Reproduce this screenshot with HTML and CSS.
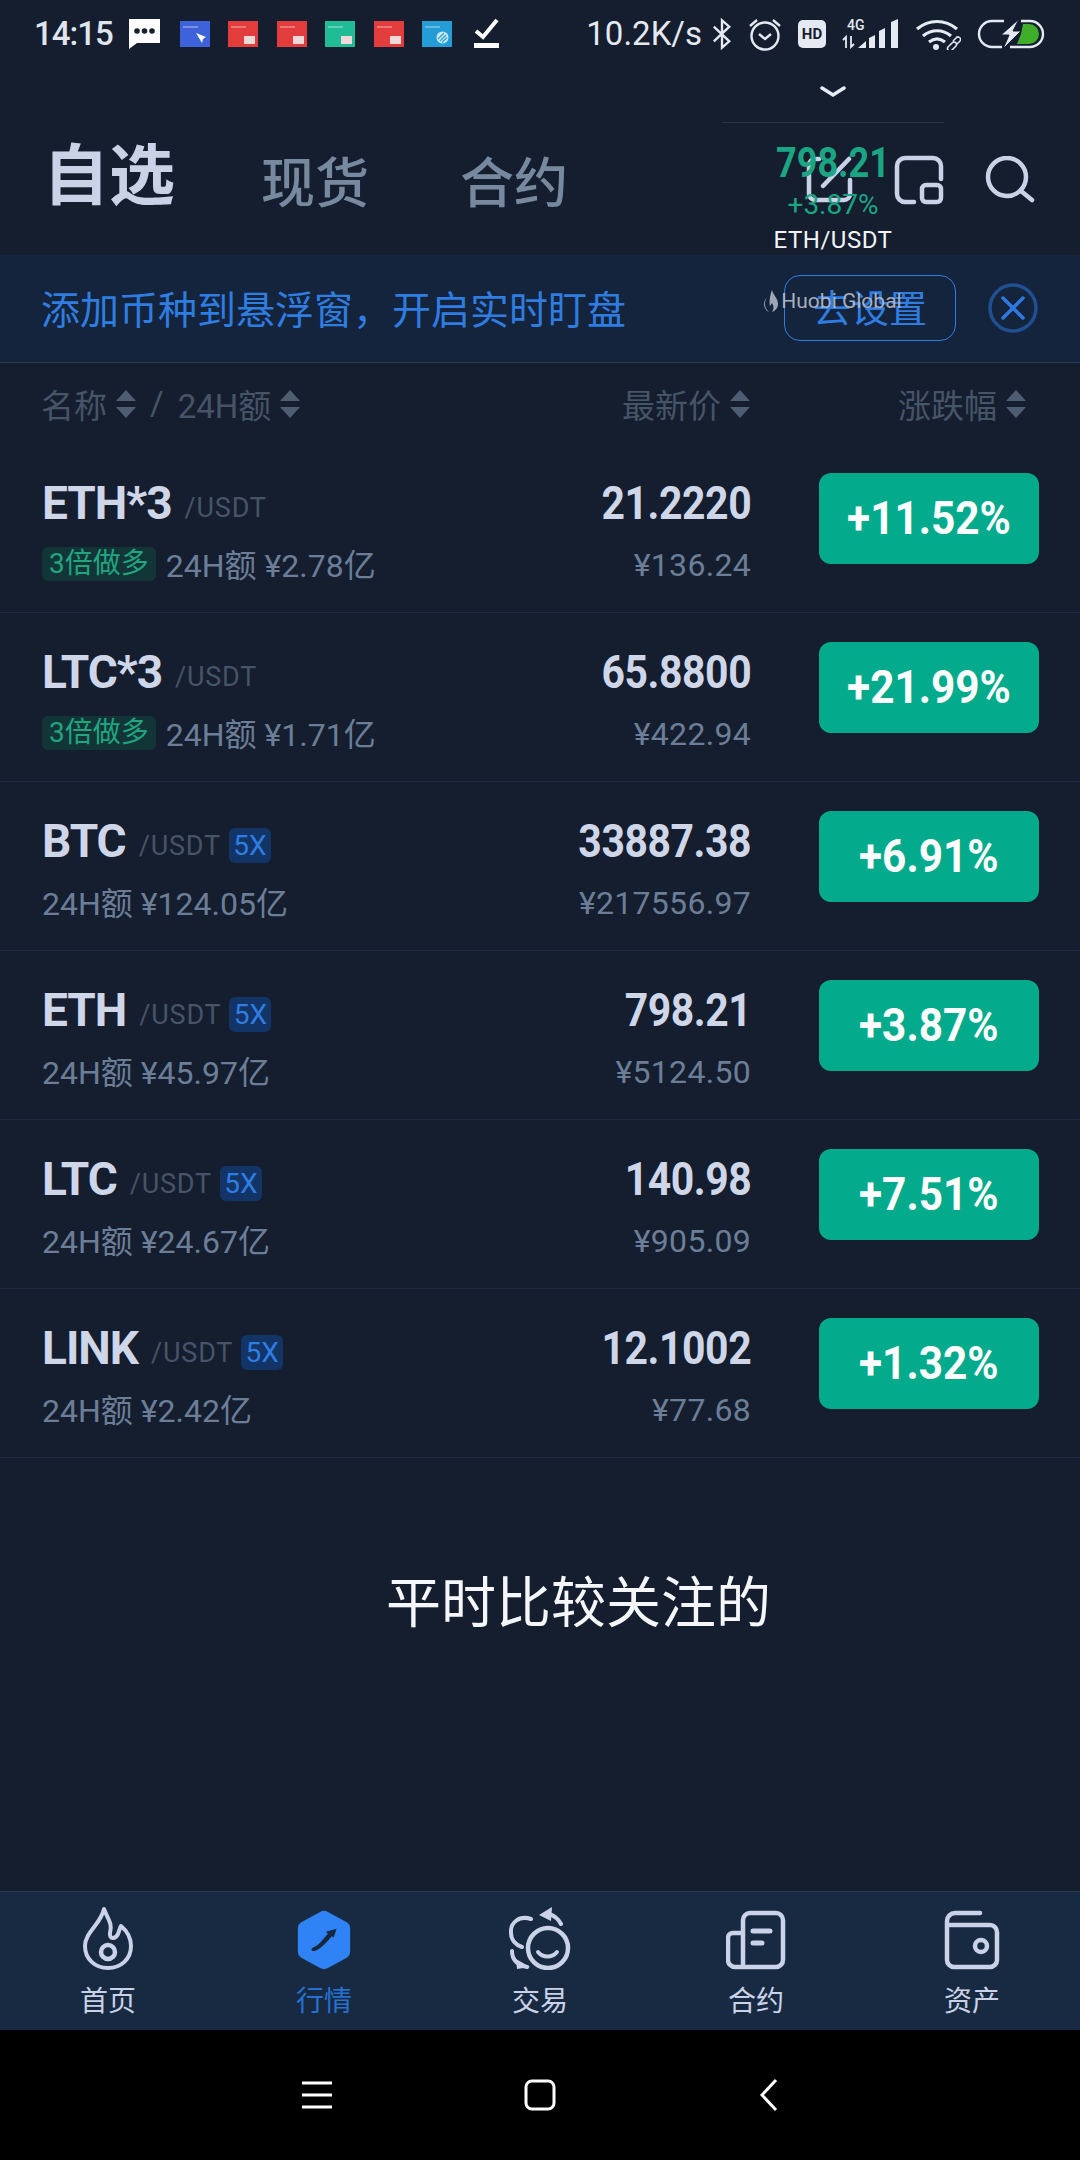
FILE: index.html
```html
<!DOCTYPE html>
<html lang="zh-CN">
<head>
    <meta charset="UTF-8">
    <meta name="viewport" content="width=device-width, initial-scale=1.0">
    <title>自选</title>
    <link rel="stylesheet" href="styles.css">
</head>
<body>
    <div class="phone">
        <div class="status-bar">
            <div class="status-left">
                <span class="clock">14:15</span>
                <svg class="msg-icon" width="33" height="32" viewBox="0 0 33 32"><path d="M1 1h31v24H9l-8 6z" fill="#fff"/><circle cx="9" cy="13" r="2.8" fill="#16202f"/><circle cx="16.5" cy="13" r="2.8" fill="#16202f"/><circle cx="24" cy="13" r="2.8" fill="#16202f"/></svg>
                <span class="app-tile tile-blue"><svg width="12" height="12" viewBox="0 0 12 12"><path d="M1 1l10 4-3 2-1 4z" fill="#fff"/></svg></span>
                <span class="app-tile tile-red"><i></i></span>
                <span class="app-tile tile-red"><i></i></span>
                <span class="app-tile tile-green"><i></i></span>
                <span class="app-tile tile-red"><i></i></span>
                <span class="app-tile tile-sky"><svg width="13" height="13" viewBox="0 0 13 13"><circle cx="6.5" cy="6.5" r="6" fill="#cfe9f7"/><path d="M2 8l6-6M4 10l6-6M6 11.500l5-5" stroke="#26a0d8" stroke-width="1.200"/></svg></span>
                <svg class="check-icon" width="25" height="31" viewBox="0 0 25 31"><path d="M2 13l7 6L23 2" fill="none" stroke="#fff" stroke-width="4"/><path d="M0 25h25v5H0z" fill="#fff"/></svg>
            </div>
            <div class="status-right">
                <span class="net-speed">10.2K/s</span>
                <svg width="20" height="34" viewBox="0 0 22 34"><path d="M2 9l17 16-8 7V2l8 7L2 25" fill="none" stroke="#e4e9f2" stroke-width="2.600"/></svg>
                <svg width="34" height="34" viewBox="0 0 34 34"><circle cx="17" cy="19" r="13.500" fill="none" stroke="#e4e9f2" stroke-width="2.400"/><path d="M11 17l6 5 6-5M2 9l7-6M32 9l-7-6" fill="none" stroke="#e4e9f2" stroke-width="2.400"/></svg>
                <span class="hd-badge">HD</span>
                <svg width="57" height="30" viewBox="0 0 57 30"><text x="5" y="11" class="net-type">4G</text><path d="M4 29V18l-3 3M9 17v11l3-3" fill="none" stroke="#e4e9f2" stroke-width="1.800"/><path d="M16 29l8-7v7zM27 29V19l6-3v13zM37 29V12l6-3v20zM49 29V3l7-3v29z" fill="#e4e9f2"/></svg>
                <svg width="46" height="32" viewBox="0 0 46 32"><path d="M2 11c12-10 28-10 40 0M8 18c8-7 20-7 28 0M14 24c5-4 11-4 16 0" fill="none" stroke="#e4e9f2" stroke-width="3.200"/><circle cx="21" cy="29" r="3" fill="#e4e9f2"/><path d="M33 29l4-4a2.500 2.500 0 0 1 4 0 2.500 2.500 0 0 1 0 3l-4 4a2.500 2.500 0 0 1-4 0 2.500 2.500 0 0 1 0-3zM38 23l3-3a2.500 2.500 0 0 1 4 3l-3 3" fill="none" stroke="#e4e9f2" stroke-width="1.500"/></svg>
                <svg width="68" height="30" viewBox="0 0 68 30"><path d="M27 2H15a13 13 0 0 0 0 26h10M44 2h9a13 13 0 0 1 0 26H33" fill="none" stroke="#e4e9f2" stroke-width="2.400"/><path d="M46 5h6a10 10 0 0 1 0 20H40l4-10z" fill="#3fae2a"/><path d="M42 0L24 16h8l-6 14 18-18h-8z" fill="#e4e9f2" stroke="#161f30" stroke-width="1"/></svg>
            </div>
        </div>

        <div class="top-bar">
            <div class="tabs">
                <span class="tab tab-active">自选</span>
                <span class="tab">现货</span>
                <span class="tab">合约</span>
            </div>
            <div class="top-icons">
                <svg width="47" height="47" viewBox="0 0 47 47"><path d="M13 3H9a6 6 0 0 0-6 6v29a6 6 0 0 0 6 6h29a6 6 0 0 0 6-6V24M17 30L43 3" fill="none" stroke="#c9d2e6" stroke-width="4.500" stroke-linecap="round"/></svg>
                <svg width="50" height="50" viewBox="0 0 50 50"><path d="M20 47H11a8 8 0 0 1-8-8V11a8 8 0 0 1 8-8h28a8 8 0 0 1 8 8v13" fill="none" stroke="#c9d2e6" stroke-width="4.500" stroke-linecap="round"/><rect x="28" y="30" width="19" height="17" rx="4" fill="none" stroke="#c9d2e6" stroke-width="4.500"/></svg>
                <svg width="50" height="47" viewBox="0 0 50 47"><circle cx="22" cy="21" r="19" fill="none" stroke="#c9d2e6" stroke-width="4.500"/><path d="M36 35l11 9" stroke="#c9d2e6" stroke-width="4.500" stroke-linecap="round"/></svg>
            </div>
        </div>

        <div class="banner">
            <span class="banner-text">添加币种到悬浮窗，开启实时盯盘</span>
            <div class="banner-actions">
                <span class="banner-btn">去设置</span>
                <svg width="50" height="50" viewBox="0 0 50 50"><circle cx="25" cy="25" r="23" fill="none" stroke="#20508f" stroke-width="3.500"/><path d="M15 15l20 20M35 15L15 35" stroke="#2f79e0" stroke-width="3.500" stroke-linecap="round"/></svg>
            </div>
        </div>

        <div class="list-head">
            <div class="head-left">
                <span>名称</span><i class="sort"></i><span class="head-slash">/</span><span>24H额</span><i class="sort"></i>
            </div>
            <div class="head-price"><span>最新价</span><i class="sort"></i></div>
            <div class="head-change"><span>涨跌幅</span><i class="sort"></i></div>
        </div>

        <div class="coin-list">
            <div class="coin-row">
                <div class="coin-info">
                    <div class="coin-name"><b>ETH*3</b><span class="quote">/USDT</span></div>
                    <div class="coin-vol"><span class="tag-long">3倍做多</span>24H额 ¥2.78亿</div>
                </div>
                <div class="coin-price"><b>21.2220</b><span>¥136.24</span></div>
                <div class="coin-change"><span>+11.52%</span></div>
            </div>
            <div class="coin-row">
                <div class="coin-info">
                    <div class="coin-name"><b>LTC*3</b><span class="quote">/USDT</span></div>
                    <div class="coin-vol"><span class="tag-long">3倍做多</span>24H额 ¥1.71亿</div>
                </div>
                <div class="coin-price"><b>65.8800</b><span>¥422.94</span></div>
                <div class="coin-change"><span>+21.99%</span></div>
            </div>
            <div class="coin-row">
                <div class="coin-info">
                    <div class="coin-name"><b>BTC</b><span class="quote">/USDT</span><span class="tag-lever">5X</span></div>
                    <div class="coin-vol">24H额 ¥124.05亿</div>
                </div>
                <div class="coin-price"><b>33887.38</b><span>¥217556.97</span></div>
                <div class="coin-change"><span>+6.91%</span></div>
            </div>
            <div class="coin-row">
                <div class="coin-info">
                    <div class="coin-name"><b>ETH</b><span class="quote">/USDT</span><span class="tag-lever">5X</span></div>
                    <div class="coin-vol">24H额 ¥45.97亿</div>
                </div>
                <div class="coin-price"><b>798.21</b><span>¥5124.50</span></div>
                <div class="coin-change"><span>+3.87%</span></div>
            </div>
            <div class="coin-row">
                <div class="coin-info">
                    <div class="coin-name"><b>LTC</b><span class="quote">/USDT</span><span class="tag-lever">5X</span></div>
                    <div class="coin-vol">24H额 ¥24.67亿</div>
                </div>
                <div class="coin-price"><b>140.98</b><span>¥905.09</span></div>
                <div class="coin-change"><span>+7.51%</span></div>
            </div>
            <div class="coin-row">
                <div class="coin-info">
                    <div class="coin-name"><b>LINK</b><span class="quote">/USDT</span><span class="tag-lever">5X</span></div>
                    <div class="coin-vol">24H额 ¥2.42亿</div>
                </div>
                <div class="coin-price"><b>12.1002</b><span>¥77.68</span></div>
                <div class="coin-change"><span>+1.32%</span></div>
            </div>
        </div>

        <div class="caption-area">
            <p class="caption">平时比较关注的</p>
        </div>

        <div class="tab-bar">
            <div class="tab-item">
                <svg width="50" height="64" viewBox="0 0 50 64"><path d="M21 3C24 12 30 17 27 27C26 33 32 34 35 28C36 25 37 22 38 20C44 25 48 32 48 40C48 53 38 62 25 62C12 62 2 53 2 40C2 26 18 18 21 3z" fill="none" stroke="#c9d2e6" stroke-width="4" stroke-linejoin="round"/><circle cx="25" cy="46" r="7" fill="none" stroke="#c9d2e6" stroke-width="4.500"/></svg>
                <span>首页</span>
            </div>
            <div class="tab-item tab-item-active">
                <svg width="56" height="60" viewBox="0 0 56 62"><path d="M24 2a8 8 0 0 1 8 0l20 11a7 7 0 0 1 3 6v24a7 7 0 0 1-3 6L32 60a8 8 0 0 1-8 0L4 49a7 7 0 0 1-3-6V19a7 7 0 0 1 3-6z" fill="#2f83f5"/><path d="M15 41c0-2 3-2.500 6-4.500 5-4 7-8 11-12l-2-2 11-3-3 9-2-1.500c-4 5-8 9-13 13-4 3-8 3-8 1z" fill="#16283f"/></svg>
                <span>行情</span>
            </div>
            <div class="tab-item">
                <svg width="62" height="64" viewBox="20 11 62 64"><circle cx="59" cy="53" r="20" fill="none" stroke="#c9d2e6" stroke-width="4.500"/><path d="M49 57C54 63 63 63 68 57" fill="none" stroke="#c9d2e6" stroke-width="4" stroke-linecap="round"/><path d="M42 24C30 20 21 28 22 38C22 45 27 50 33 52M23 56C23 65 28 70 38 72M60 19C66 21 70 25 72 29" fill="none" stroke="#c9d2e6" stroke-width="4" stroke-linecap="round"/><path d="M50 20L63 12L62 26zM28 74L41 72L27 64z" fill="#c9d2e6"/></svg>
                <span>交易</span>
            </div>
            <div class="tab-item">
                <svg width="60" height="60" viewBox="0 0 60 60"><path d="M17 57V10a7 7 0 0 1 7-7h26a7 7 0 0 1 7 7v40a7 7 0 0 1-7 7H9a7 7 0 0 1-7-7V28a5 5 0 0 1 5-5h10" fill="none" stroke="#c9d2e6" stroke-width="4.500"/><path d="M27 21h17M27 33h9" stroke="#c9d2e6" stroke-width="5" stroke-linecap="round"/></svg>
                <span>合约</span>
            </div>
            <div class="tab-item">
                <svg width="56" height="60" viewBox="0 0 56 60"><path d="M36 3H11a8 8 0 0 0-8 8v39a7 7 0 0 0 7 7h36a7 7 0 0 0 7-7V22a7 7 0 0 0-7-7H3" fill="none" stroke="#c9d2e6" stroke-width="4.500" stroke-linecap="round"/><circle cx="37" cy="36" r="6" fill="none" stroke="#c9d2e6" stroke-width="4.500"/></svg>
                <span>资产</span>
            </div>
        </div>

        <div class="nav-bar">
            <svg class="nav-menu" width="30" height="28" viewBox="0 0 30 28"><path d="M0 2h30M0 14h30M0 26h30" stroke="#fff" stroke-width="3"/></svg>
            <svg class="nav-home" width="32" height="32" viewBox="0 0 32 32"><rect x="2" y="2" width="28" height="28" rx="6" fill="none" stroke="#fff" stroke-width="3"/></svg>
            <svg width="18" height="34" viewBox="0 0 18 34"><path d="M16 2L2 17l14 15" fill="none" stroke="#fff" stroke-width="3"/></svg>
        </div>

        <!-- floating price window, sits over the top bar and banner -->
        <div class="float-win">
            <svg class="float-arrow" width="26" height="12" viewBox="0 0 26 12"><path d="M2 2l11 7 11-7" fill="none" stroke="#e9edf5" stroke-width="3.500" stroke-linecap="round"/></svg>
            <div class="float-line"></div>
            <div class="float-price">798.21</div>
            <div class="float-pct">+3.87%</div>
            <div class="float-pair">ETH/USDT</div>
            <div class="float-brand">
                <svg width="14" height="22" viewBox="0 0 14 22"><path d="M8 0c1 5 6 8 6 14 0 4-3 7-6 8 2-3 2-6 0-9-1 1-1 2-2 3C5 12 6 5 8 0zM3 8c-3 3-3 10 2 14C2 21 0 17 0 14c0-2 1-5 3-6z" fill="#aeb6c4"/></svg>
                <span>Huobi Global</span>
            </div>
        </div>
    </div>
</body>
</html>
```

FILE: styles.css
```css
* {
    box-sizing: border-box;
}
html, body {
    margin: 0;
    padding: 0;
}
body {
    font-family: Roboto, "Noto Sans CJK SC", sans-serif;
    background-color: #141e2f;
}
.phone {
    position: relative;
    display: flex;
    flex-direction: column;
    width: 1080px;
    height: 2160px;
    overflow: hidden;
    background-color: #141e2f;
}

/* status bar */
.status-bar {
    display: flex;
    justify-content: space-between;
    align-items: center;
    height: 70px;
    padding: 0 35px 3px 34px;
}
.status-left, .status-right {
    display: flex;
    align-items: center;
}
.clock {
    width: 77px;
    font-size: 33px;
    font-weight: 500;
    letter-spacing: -1px;
    color: #dfe4ee;
}
.msg-icon {
    margin-left: 17px;
}
.app-tile {
    position: relative;
    display: flex;
    justify-content: flex-end;
    align-items: flex-end;
    width: 30px;
    height: 26px;
    margin-left: 18.500px;
    padding: 3px;
}
.app-tile::before {
    content: "";
    position: absolute;
    top: 5px;
    left: 3px;
    width: 15px;
    height: 2px;
    background-color: rgba(255, 255, 255, 0.3);
}
.app-tile i {
    display: block;
    width: 11px;
    height: 8px;
    background-color: #f2d9d9;
}
.tile-blue {
    background-color: #3e62da;
}
.tile-red {
    background-color: #e23c3c;
}
.tile-green {
    background-color: #1fbc96;
}
.tile-sky {
    background-color: #249dd6;
}
.check-icon {
    margin-left: 22px;
}
.status-right {
    gap: 16px;
}
.net-speed {
    flex-shrink: 0;
    font-size: 33px;
    line-height: 40px;
    white-space: nowrap;
    color: #e4e9f2;
    margin-right: -6px;
}
.hd-badge {
    width: 28px;
    height: 28px;
    border-radius: 5px;
    background-color: #e4e9f2;
    color: #16202f;
    font-size: 15px;
    font-weight: 700;
    line-height: 28px;
    text-align: center;
}
.net-type {
    font-family: Roboto, sans-serif;
    font-size: 14px;
    font-weight: 500;
    fill: #e4e9f2;
}

/* title row */
.top-bar {
    display: flex;
    justify-content: space-between;
    align-items: center;
    height: 185px;
    padding: 0 45px 0 43px;
}
.tabs {
    display: flex;
    align-items: flex-end;
    gap: 91px;
    padding-top: 36px;
}
.tab {
    font-size: 54px;
    font-weight: 500;
    line-height: 70px;
    color: #76899f;
}
.tab-active {
    font-size: 66px;
    font-weight: 700;
    color: #c9d2e6;
    margin-right: -5px;
    margin-bottom: 8px;
}
.top-icons {
    display: flex;
    align-items: center;
    gap: 41px;
    padding-top: 34px;
}

/* notice banner */
.banner {
    display: flex;
    justify-content: space-between;
    align-items: center;
    height: 108px;
    padding: 0 42px 0 41px;
    background-color: #14243c;
    border-bottom: 1px solid #2a3a4f;
}
.banner-text {
    padding-bottom: 4px;
    font-size: 39px;
    color: #2f7de0;
}
.banner-actions {
    display: flex;
    align-items: center;
    gap: 32px;
    padding-bottom: 2px;
}
.banner-btn {
    width: 172px;
    height: 66px;
    border: 1px solid #2f7de0;
    border-radius: 16px;
    font-size: 38px;
    line-height: 66px;
    text-align: center;
    color: #2f7de0;
}

/* column heads */
.list-head {
    display: flex;
    align-items: center;
    height: 81px;
    padding: 0 54px 0 41px;
    font-size: 33px;
    color: #465467;
}
.head-left {
    display: flex;
    align-items: center;
    flex: 1;
}
.head-slash {
    margin: 0 14px;
}
.head-price, .head-change {
    display: flex;
    align-items: center;
}
.head-change {
    width: 276px;
    justify-content: flex-end;
}
.sort {
    position: relative;
    display: block;
    width: 20px;
    height: 28px;
    margin-left: 9px;
}
.sort::before, .sort::after {
    content: "";
    position: absolute;
    left: 0;
    width: 0;
    height: 0;
    border-left: 10px solid transparent;
    border-right: 10px solid transparent;
}
.sort::before {
    top: 0;
    border-bottom: 11px solid #4f5d72;
}
.sort::after {
    bottom: 0;
    border-top: 11px solid #4f5d72;
}

/* rows */
.coin-row {
    display: flex;
    align-items: center;
    height: 169px;
    padding: 0 41px 0 42px;
    border-bottom: 1px solid #1f2b3d;
}
.coin-info {
    flex: 1;
    padding-top: 4px;
}
.coin-name {
    display: flex;
    align-items: center;
    height: 50px;
}
.coin-name b {
    font-size: 46px;
    font-weight: 700;
    letter-spacing: -1px;
    color: #cfd6e8;
}
.quote {
    margin-left: 13px;
    padding-top: 11px;
    font-size: 27px;
    letter-spacing: 0.8px;
    color: #465467;
}
.tag-lever {
    margin-left: 8px;
    margin-top: 9px;
    width: 42px;
    height: 35px;
    border-radius: 6px;
    background-color: #123466;
    color: #2f7de0;
    font-size: 28px;
    line-height: 35px;
    text-align: center;
}
.coin-vol {
    display: flex;
    align-items: center;
    height: 40px;
    margin-top: 15px;
    font-size: 32px;
    white-space: pre;
    color: #6c7e97;
}
.tag-long {
    height: 34px;
    margin-top: 3px;
    margin-right: 10px;
    padding: 0 7px;
    border-radius: 6px;
    background-color: #123638;
    color: #21a57f;
    font-size: 28px;
    line-height: 34px;
}
.coin-price {
    display: flex;
    flex-direction: column;
    align-items: flex-end;
    margin-right: 68px;
    padding-top: 7px;
}
/* the app's number font is narrower than anything installed */
.coin-price b {
    height: 50px;
    font-size: 46px;
    line-height: 50px;
    font-weight: 700;
    letter-spacing: -0.5px;
    color: #cfd6e8;
    transform: scaleX(0.89);
    transform-origin: right center;
}
.coin-price span {
    height: 40px;
    margin-top: 17px;
    font-size: 32px;
    line-height: 40px;
    letter-spacing: 0.3px;
    color: #6c7e97;
}
.coin-change {
    width: 220px;
    height: 91px;
    margin-bottom: 20px;
    border-radius: 12px;
    background-color: #03aa8c;
    color: #fff;
    font-size: 46px;
    font-weight: 700;
    line-height: 91px;
    text-align: center;
}
.coin-change span {
    display: inline-block;
    transform: scaleX(0.92);
}

/* video caption */
.caption-area {
    flex: 1;
    padding-top: 115px;
}
.caption {
    margin: 0;
    padding-left: 386px;
    font-size: 55px;
    line-height: 60px;
    color: #f4f6fa;
}

/* bottom tabs */
.tab-bar {
    display: flex;
    align-items: flex-end;
    height: 139px;
    padding-bottom: 12px;
    background-color: #182a42;
    border-top: 1px solid #2a3a4f;
}
.tab-item {
    display: flex;
    flex-direction: column;
    align-items: center;
    justify-content: flex-end;
    gap: 16px;
    flex: 1;
    font-size: 28px;
    line-height: 32px;
    color: #c9d2e6;
}
.tab-item-active {
    color: #2670cf;
}
.nav-bar {
    display: flex;
    align-items: center;
    height: 130px;
    padding-left: 302px;
    background-color: #000;
}
.nav-menu {
    margin-right: 192px;
}
.nav-home {
    margin-right: 204px;
}

/* floating window */
.float-win {
    position: absolute;
    top: 86px;
    left: 722px;
    width: 222px;
    color: #fff;
    text-align: center;
}
.float-arrow {
    display: block;
    margin: 0 auto;
}
.float-line {
    height: 1px;
    margin-top: 24px;
    background-color: #2a3444;
}
.float-price {
    margin-top: 18px;
    font-size: 42px;
    line-height: 44px;
    font-weight: 700;
    color: #1ba583;
    transform: scaleX(0.86);
}
.float-pct {
    margin-top: 4px;
    font-size: 28px;
    line-height: 32px;
    color: #1ba583;
}
.float-pair {
    margin-top: 4px;
    font-size: 24px;
    line-height: 30px;
    letter-spacing: 0.5px;
    color: #f2f4f8;
}
.float-brand {
    display: flex;
    justify-content: center;
    align-items: center;
    gap: 3px;
    margin-top: 34px;
    font-size: 21px;
    color: #b7bec9;
    opacity: 0.9;
}
```
